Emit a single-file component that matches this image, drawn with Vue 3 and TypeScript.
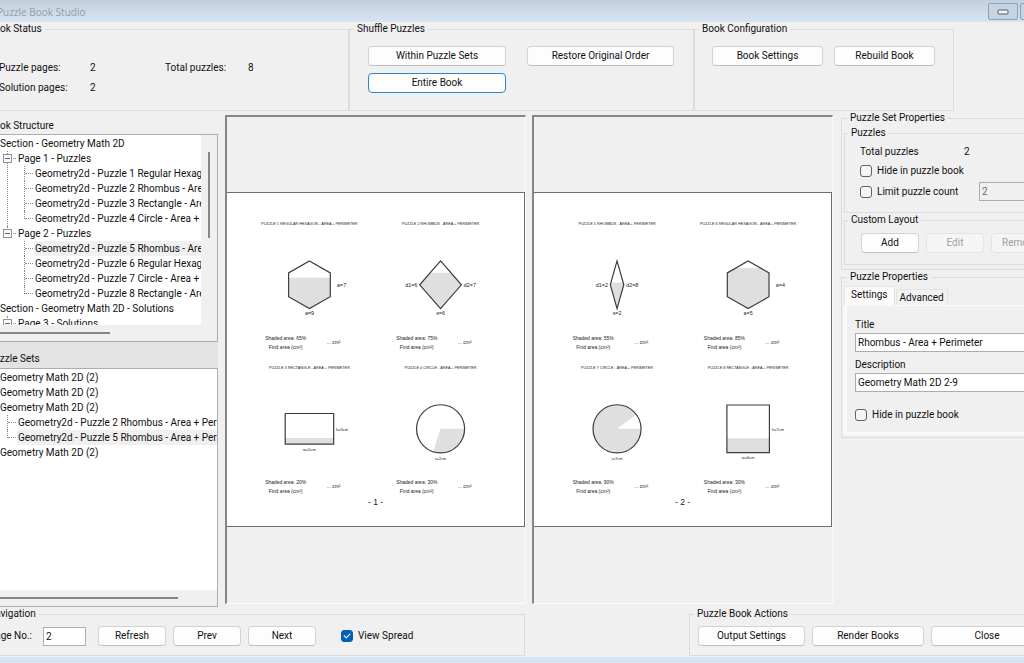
<script setup lang="ts">
import { computed, ref } from 'vue'

type Kind = 'hexagon' | 'rhombus' | 'rectangle' | 'circle'

interface Puzzle {
  title: string
  kind: Kind
  shaded: number
  halfWidth: number
  halfHeight: number
  below: string
  right?: string
  left?: string
  x: number
  y: number
}

interface TreeNode {
  label: string
  selected?: boolean
  children?: TreeNode[]
}

const pageNumber = ref('2')
const viewSpread = ref(true)
const hideSet = ref(false)
const limitCount = ref(false)
const countLimit = ref('2')
const hidePuzzle = ref(false)
const puzzleTitle = ref('Rhombus - Area + Perimeter')
const puzzleDescription = ref('Geometry Math 2D 2-9')
const activeTab = ref('Settings')

const structure: TreeNode[] = [
  {
    label: 'Section - Geometry Math 2D',
    children: [
      {
        label: 'Page 1 - Puzzles',
        children: [
          { label: 'Geometry2d - Puzzle 1 Regular Hexagon - Area + Perimeter' },
          { label: 'Geometry2d - Puzzle 2 Rhombus - Area + Perimeter' },
          { label: 'Geometry2d - Puzzle 3 Rectangle - Area + Perimeter' },
          { label: 'Geometry2d - Puzzle 4 Circle - Area + Perimeter' },
        ],
      },
      {
        label: 'Page 2 - Puzzles',
        children: [
          { label: 'Geometry2d - Puzzle 5 Rhombus - Area + Perimeter', selected: true },
          { label: 'Geometry2d - Puzzle 6 Regular Hexagon - Area + Perimeter' },
          { label: 'Geometry2d - Puzzle 7 Circle - Area + Perimeter' },
          { label: 'Geometry2d - Puzzle 8 Rectangle - Area + Perimeter' },
        ],
      },
    ],
  },
  {
    label: 'Section - Geometry Math 2D - Solutions',
    children: [{ label: 'Page 3 - Solutions', children: [] }],
  },
]

const sets: TreeNode[] = [
  { label: 'Geometry Math 2D (2)' },
  { label: 'Geometry Math 2D (2)' },
  {
    label: 'Geometry Math 2D (2)',
    children: [
      { label: 'Geometry2d - Puzzle 2 Rhombus - Area + Perimeter' },
      { label: 'Geometry2d - Puzzle 5 Rhombus - Area + Perimeter', selected: true },
    ],
  },
  { label: 'Geometry Math 2D (2)' },
]

const pages: { number: number; puzzles: Puzzle[] }[] = [
  {
    number: 1,
    puzzles: [
      { title: 'PUZZLE 1 REGULAR HEXAGON - AREA + PERIMETER', kind: 'hexagon', shaded: 65, halfWidth: 105, halfHeight: 120, below: 'a=9', right: 'a=7', x: 415, y: 462 },
      { title: 'PUZZLE 2 RHOMBUS - AREA + PERIMETER', kind: 'rhombus', shaded: 75, halfWidth: 105, halfHeight: 120, below: 's=6', left: 'd1=6', right: 'd2=7', x: 1075, y: 462 },
      { title: 'PUZZLE 3 RECTANGLE - AREA + PERIMETER', kind: 'rectangle', shaded: 20, halfWidth: 122, halfHeight: 77, below: 'w=5cm', right: 'h=3cm', x: 415, y: 1187 },
      { title: 'PUZZLE 4 CIRCLE - AREA + PERIMETER', kind: 'circle', shaded: 30, halfWidth: 121, halfHeight: 121, below: 'r=2cm', x: 1075, y: 1187 },
    ],
  },
  {
    number: 2,
    puzzles: [
      { title: 'PUZZLE 5 RHOMBUS - AREA + PERIMETER', kind: 'rhombus', shaded: 55, halfWidth: 34, halfHeight: 120, below: 's=2', left: 'd1=2', right: 'd2=8', x: 418, y: 462 },
      { title: 'PUZZLE 6 REGULAR HEXAGON - AREA + PERIMETER', kind: 'hexagon', shaded: 85, halfWidth: 105, halfHeight: 120, below: 'a=5', right: 'a=4', x: 1078, y: 462 },
      { title: 'PUZZLE 7 CIRCLE - AREA + PERIMETER', kind: 'circle', shaded: 90, halfWidth: 121, halfHeight: 121, below: 'r=7cm', x: 418, y: 1187 },
      { title: 'PUZZLE 8 RECTANGLE - AREA + PERIMETER', kind: 'rectangle', shaded: 30, halfWidth: 107, halfHeight: 120, below: 'w=6cm', right: 'h=7cm', x: 1078, y: 1187 },
    ],
  },
]

function outline(p: Puzzle): string {
  const { halfWidth: w, halfHeight: h } = p
  if (p.kind === 'hexagon') return `M0 ${-h}L${w} ${-h / 2}V${h / 2}L0 ${h}L${-w} ${h / 2}V${-h / 2}Z`
  if (p.kind === 'rhombus') return `M0 ${-h}L${w} 0L0 ${h}L${-w} 0Z`
  if (p.kind === 'rectangle') return `M${-w} ${-h}H${w}V${h}H${-w}Z`
  return `M${w} 0A${w} ${w} 0 1 1 ${-w} 0A${w} ${w} 0 1 1 ${w} 0Z`
}

function shade(p: Puzzle): string {
  const { halfWidth: w, halfHeight: h } = p
  if (p.kind === 'circle') {
    const angle = (p.shaded / 100) * Math.PI * 2
    const large = p.shaded > 50 ? 1 : 0
    return `M0 0H${w}A${w} ${w} 0 ${large} 1 ${w * Math.cos(angle)} ${w * Math.sin(angle)}Z`
  }
  const top = h - (2 * h * p.shaded) / 100
  if (p.kind === 'rectangle') return `M${-w} ${top}H${w}V${h}H${-w}Z`
  if (p.kind === 'hexagon') {
    if (top > -h / 2) return `M${-w} ${top}H${w}V${h / 2}L0 ${h}L${-w} ${h / 2}Z`
    const x = (w * (top + h)) / (h / 2)
    return `M${-x} ${top}H${x}L${w} ${-h / 2}V${h / 2}L0 ${h}L${-w} ${h / 2}V${-h / 2}Z`
  }
  const x = (w * (h - Math.abs(top))) / h
  return `M${-x} ${top}H${x}L${w} 0L0 ${h}L${-w} 0Z`
}

function sideGap(p: Puzzle): number {
  return p.halfWidth + (p.kind === 'hexagon' ? 34 : 12)
}

const spread = computed(() => (viewSpread.value ? pages : pages.slice(0, 1)))
</script>

<template>
  <div class="window">
    <header class="titlebar">
      <h1>Puzzle Book Studio</h1>
      <div class="window-buttons">
        <button type="button" aria-label="Minimize">
          <svg width="12" height="6" viewBox="0 0 12 6"><rect x="1" y="1" width="10" height="4" rx="1" fill="#f4f4f4" stroke="#535666" /></svg>
        </button>
        <button type="button" aria-label="Maximize">
          <svg width="12" height="10" viewBox="0 0 12 10"><rect x="1" y="1" width="10" height="8" rx="1" fill="#f4f4f4" stroke="#535666" /></svg>
        </button>
      </div>
    </header>

    <div class="top">
      <fieldset class="status">
        <legend>Book Status</legend>
        <dl>
          <dt>Puzzle pages:</dt><dd>2</dd>
          <dt>Total puzzles:</dt><dd>8</dd>
          <dt>Solution pages:</dt><dd>2</dd>
        </dl>
      </fieldset>
      <fieldset>
        <legend>Shuffle Puzzles</legend>
        <div class="shuffle">
          <button type="button" class="btn">Within Puzzle Sets</button>
          <button type="button" class="btn">Restore Original Order</button>
          <button type="button" class="btn focused">Entire Book</button>
        </div>
      </fieldset>
      <fieldset>
        <legend>Book Configuration</legend>
        <div class="config">
          <button type="button" class="btn">Book Settings</button>
          <button type="button" class="btn">Rebuild Book</button>
        </div>
      </fieldset>
    </div>

    <main class="main">
      <aside class="sidebar">
        <h2>Book Structure</h2>
        <div class="tree structure">
          <div class="tree-view">
            <ul class="roots">
              <li v-for="section in structure" :key="section.label">
                <span class="node">{{ section.label }}</span>
                <ul class="branch">
                  <li v-for="page in section.children" :key="page.label" class="leaf">
                    <button type="button" class="toggle" :aria-label="'Collapse ' + page.label"></button>
                    <span class="node">{{ page.label }}</span>
                    <ul class="branch">
                      <li v-for="item in page.children" :key="item.label" class="leaf">
                        <span class="node" :class="{ selected: item.selected }">{{ item.label }}</span>
                      </li>
                    </ul>
                  </li>
                </ul>
              </li>
            </ul>
          </div>
          <div class="vbar"><i></i></div>
          <div class="hbar"><i></i></div>
        </div>
        <h2 class="sets-title">Puzzle Sets</h2>
        <div class="tree sets">
          <div class="tree-view">
            <ul class="roots">
              <li v-for="(set, i) in sets" :key="i">
                <span class="node">{{ set.label }}</span>
                <ul v-if="set.children" class="branch">
                  <li v-for="item in set.children" :key="item.label" class="leaf">
                    <span class="node" :class="{ selected: item.selected }">{{ item.label }}</span>
                  </li>
                </ul>
              </li>
            </ul>
          </div>
          <div class="hbar"><i></i></div>
        </div>
      </aside>

      <section class="spread">
        <div v-for="page in spread" :key="page.number" class="preview">
          <svg class="page" viewBox="0 0 1495 1680" role="img" :aria-label="'Page ' + page.number">
            <g v-for="p in page.puzzles" :key="p.title" :transform="`translate(${p.x} ${p.y})`">
              <text class="p-title" x="0" y="-300" text-anchor="middle">{{ p.title }}</text>
              <path :d="shade(p)" fill="#dfdfdf" />
              <path :d="outline(p)" fill="none" stroke="#3c3c3c" stroke-width="6" />
              <text v-if="p.left" class="p-side" :x="-sideGap(p)" y="10" text-anchor="end">{{ p.left }}</text>
              <text v-if="p.right" :class="p.kind === 'rectangle' ? 'p-small' : 'p-side'" :x="sideGap(p)" y="10">{{ p.right }}</text>
              <text :class="p.below.length > 3 ? 'p-small' : 'p-side'" x="0" :y="p.halfHeight + 34" text-anchor="middle">{{ p.below }}</text>
              <text class="p-text" x="-223" y="276">Shaded area: {{ p.shaded }}%</text>
              <text class="p-text" x="-205" y="324">Find area (cm²)</text>
              <text class="p-text" x="87" y="300">... cm²</text>
            </g>
            <text class="p-number" x="748" y="1570" text-anchor="middle">- {{ page.number }} -</text>
          </svg>
        </div>
      </section>

      <aside class="properties">
        <fieldset class="set-properties">
          <legend>Puzzle Set Properties</legend>
          <fieldset class="puzzles">
            <legend>Puzzles</legend>
            <div class="row total"><span>Total puzzles</span><output>2</output></div>
            <div class="row hide"><label class="check"><input v-model="hideSet" type="checkbox" />Hide in puzzle book</label></div>
            <div class="row limit">
              <label class="check"><input v-model="limitCount" type="checkbox" />Limit puzzle count</label>
              <input v-model="countLimit" class="text" type="text" aria-label="Puzzle count limit" :disabled="!limitCount" />
            </div>
          </fieldset>
          <fieldset class="layout">
            <legend>Custom Layout</legend>
            <div class="layout-buttons">
              <button type="button" class="btn">Add</button>
              <button type="button" class="btn" disabled>Edit</button>
              <button type="button" class="btn" disabled>Remove</button>
            </div>
          </fieldset>
        </fieldset>

        <fieldset class="puzzle-properties">
          <legend>Puzzle Properties</legend>
          <div class="tabs" role="tablist">
            <button
              v-for="tab in ['Settings', 'Advanced']"
              :key="tab"
              type="button"
              role="tab"
              :aria-selected="activeTab === tab"
              :class="{ active: activeTab === tab }"
              @click="activeTab = tab"
            >{{ tab }}</button>
          </div>
          <div class="tab-panel" role="tabpanel">
            <label class="field" for="puzzle-title">Title</label>
            <input id="puzzle-title" v-model="puzzleTitle" class="text" type="text" />
            <label class="field" for="puzzle-description">Description</label>
            <input id="puzzle-description" v-model="puzzleDescription" class="text" type="text" />
            <label class="check"><input v-model="hidePuzzle" type="checkbox" />Hide in puzzle book</label>
          </div>
        </fieldset>
      </aside>
    </main>

    <footer class="bottom">
      <fieldset class="nav-group">
        <legend>Navigation</legend>
        <div class="navigation">
          <label for="page-no">Page No.:</label>
          <input id="page-no" v-model="pageNumber" class="text" type="text" />
          <button type="button" class="btn">Refresh</button>
          <button type="button" class="btn">Prev</button>
          <button type="button" class="btn">Next</button>
          <label class="check"><input v-model="viewSpread" type="checkbox" />View Spread</label>
        </div>
      </fieldset>
      <fieldset>
        <legend>Puzzle Book Actions</legend>
        <div class="actions">
          <button type="button" class="btn">Output Settings</button>
          <button type="button" class="btn">Render Books</button>
          <button type="button" class="btn">Close</button>
        </div>
      </fieldset>
    </footer>
  </div>
</template>

<style>
body {
  margin: 0;
  overflow: hidden;
  background: #f0f0f0;
}
</style>

<style scoped>
.window,
.window * {
  box-sizing: border-box;
}

/* The window is wider than the viewport and starts left of it. */
.window {
  display: flex;
  flex-direction: column;
  width: calc(100% + 66px);
  min-height: 100vh;
  margin-left: -16px;
  border-bottom: 6px solid #d7e4f2;
  background: #f0f0f0;
  color: #111;
  font-family: Roboto, "Liberation Sans", Arial, sans-serif;
  font-size: 10px;
  line-height: 14px;
}

button,
input {
  font: inherit;
  color: inherit;
}

.titlebar {
  display: flex;
  justify-content: space-between;
  height: 22px;
  padding: 0 24px 0 13px;
  background: linear-gradient(#c2cfdc, #d7e4f2);
}

h1 {
  margin: 0;
  color: #969ca3;
  font-family: "Open Sans", "Noto Sans", sans-serif;
  font-size: 10px;
  font-weight: 400;
  line-height: 24px;
}

.window-buttons {
  display: flex;
  gap: 2px;
  padding-top: 3px;
}

.window-buttons button {
  display: grid;
  place-items: center;
  width: 30px;
  height: 17px;
  padding: 0;
  border: 1px solid #8e9fb8;
  border-radius: 2px;
  background: #c5d3e5;
}

fieldset {
  min-width: 0;
  margin: 0;
  padding: 0;
  border: 1px solid #dcdcdc;
}

legend {
  margin-left: 4px;
  padding: 0 3px;
}

.status legend,
.nav-group legend {
  margin-left: 0;
}

.properties legend {
  margin-left: 3px;
}

.btn {
  height: 20px;
  padding: 0 4px;
  border: 1px solid #d2d2d2;
  border-bottom-color: #bebebe;
  border-radius: 4px;
  background: #fdfdfd;
  line-height: 18px;
  white-space: nowrap;
}

.btn.focused {
  border-color: #2b86d3;
}

.btn:disabled {
  border-color: #e4e4e4;
  background: #f5f5f5;
  color: #a0a0a0;
}

.text {
  min-width: 0;
  height: 19px;
  padding: 0 2px;
  border: 1px solid #abadb3;
  border-radius: 0;
  background: #fff;
}

.text:disabled {
  background: #f0f0f0;
  color: #6d6d6d;
}

.check {
  display: flex;
  align-items: center;
  gap: 5px;
  white-space: nowrap;
}

.check input {
  display: grid;
  place-items: center;
  width: 12px;
  height: 12px;
  margin: 0;
  border: 1px solid #626262;
  border-radius: 3px;
  appearance: none;
  background: #f5f5f5;
}

.check input:checked {
  border-color: #005fb8;
  background: #005fb8;
}

.check input:checked::after {
  width: 5px;
  height: 3px;
  margin-top: -2px;
  border: solid #fff;
  border-width: 0 0 1px 1px;
  content: "";
  transform: rotate(-45deg);
}

.top {
  display: grid;
  grid-template-columns: 365px 345px 260px;
  height: 89px;
}

.status dl {
  display: grid;
  grid-template-columns: 91px 75px 83px 1fr;
  grid-auto-rows: 20px;
  margin: 0;
  padding: 22px 0 0 14px;
  line-height: 20px;
}

.status dd {
  margin: 0;
}

.shuffle {
  display: grid;
  grid-template-columns: 138px 147px;
  gap: 7px 21px;
  padding: 10px 0 0 18px;
}

.config {
  display: grid;
  grid-template-columns: 111px 101px;
  gap: 11px;
  padding: 10px 0 0 17px;
}

.main {
  display: grid;
  flex: 1;
  grid-template-columns: 234px 1fr 233px;
}

.sidebar {
  display: flex;
  flex-direction: column;
  background: #e3e3e3;
}

h2 {
  margin: 0;
  padding: 8px 0 1px 4px;
  background: #f0f0f0;
  font-size: 10px;
  font-weight: 400;
}

h2.sets-title {
  padding: 10px 0 2px 4px;
  background: none;
}

.tree {
  display: grid;
  grid-template-columns: minmax(0, 1fr) auto;
  grid-template-rows: minmax(0, 1fr) 16px;
  border: 1px solid #abadb3;
  background: #fff;
}

.structure {
  height: 208px;
}

.sets {
  flex: 1;
}

.tree-view {
  overflow: hidden;
}

.roots {
  padding: 1px 0 0 15px;
}

.tree ul {
  margin: 0;
  list-style: none;
}

.tree li {
  position: relative;
  line-height: 15px;
  white-space: nowrap;
}

.branch {
  padding-left: 17px;
}

.node {
  display: block;
  overflow: hidden;
  padding-left: 1px;
}

.roots > li > .node {
  padding-left: 0;
}

.selected {
  background: #f0f0f0;
}

.leaf::before {
  position: absolute;
  top: 0;
  bottom: 0;
  left: -10px;
  border-left: 1px dotted #8c8c8c;
  content: "";
}

.leaf:last-child::before {
  bottom: auto;
  height: 8px;
}

.leaf::after {
  position: absolute;
  top: 7px;
  left: -9px;
  width: 8px;
  border-top: 1px dotted #8c8c8c;
  content: "";
}

.toggle {
  position: absolute;
  z-index: 1;
  top: 3px;
  left: -14px;
  display: grid;
  place-items: center;
  width: 9px;
  height: 9px;
  padding: 0;
  border: 1px solid #919191;
  background: #fafafa;
}

.toggle::before {
  width: 5px;
  height: 1px;
  background: #4b63a7;
  content: "";
}

.vbar,
.hbar {
  display: flex;
  background: #f0f0f0;
}

.vbar {
  width: 16px;
  padding: 17px 0 0 7px;
}

.vbar i {
  width: 2px;
  height: 86px;
  background: #858585;
}

.hbar {
  grid-column: 1 / -1;
  padding-top: 7px;
}

.hbar i {
  width: 83%;
  height: 2px;
  background: #858585;
}

.structure .hbar i {
  width: 54%;
}

.spread {
  display: flex;
  gap: 6px;
  padding: 4px 8px 3px 7px;
}

.preview {
  display: flex;
  flex: 1;
  align-items: center;
  min-width: 0;
  padding-bottom: 1px;
  border: solid;
  border-width: 2px 1px 1px 2px;
  border-color: #858585 #fafafa #fafafa #858585;
}

.page {
  width: 100%;
  border: 1px solid #6e6e6e;
  border-left: 0;
  background: #fff;
}

.page text {
  fill: #222;
  font-family: "Liberation Sans", Arial, sans-serif;
}

.page .p-title {
  font-size: 19px;
}

.page .p-side {
  font-size: 27px;
}

.page .p-small {
  font-size: 20px;
}

.page .p-text {
  font-size: 25px;
}

.page .p-number {
  font-size: 43px;
}

.set-properties {
  padding: 1px 2px 4px;
}

.puzzles {
  height: 87px;
}

.row {
  display: flex;
  align-items: center;
  padding-left: 15px;
}

.total {
  height: 24px;
}

.total span {
  width: 104px;
}

.hide {
  height: 13px;
}

.limit {
  height: 29px;
}

.limit .check {
  width: 119px;
}

.limit .text {
  width: 80px;
}

.layout {
  height: 52px;
}

.layout-buttons {
  display: grid;
  grid-template-columns: repeat(3, 58px);
  gap: 7px;
  padding: 6px 0 0 16px;
}

.puzzle-properties {
  padding: 2px;
}

.tabs {
  display: flex;
  align-items: flex-end;
  gap: 1px;
}

.tabs button {
  height: 16px;
  padding: 0 3px;
  border: 1px solid #e4e4e4;
  border-bottom: 0;
  background: #f2f2f2;
}

.tabs .active {
  height: 19px;
  padding: 0 6px 3px;
  background: #fafafa;
}

.tab-panel {
  display: flex;
  flex-direction: column;
  padding: 12px 6px 10px 8px;
  border: 3px solid #f9f9f9;
  border-top-width: 1px;
}

.field {
  padding-bottom: 1px;
}

.tab-panel .text + .field {
  padding-top: 6px;
}

.tab-panel .check {
  padding-top: 16px;
}

.bottom {
  display: grid;
  grid-template-columns: 541px 385px;
  justify-content: space-between;
  padding-bottom: 1px;
}

.bottom fieldset {
  height: 49px;
}

.navigation {
  display: flex;
  align-items: center;
  gap: 7px;
  padding: 5px 0 0 4px;
}

.navigation label[for] {
  width: 47px;
  white-space: nowrap;
}

.navigation .text {
  width: 43px;
  margin-right: 5px;
}

.navigation .btn {
  width: 68px;
}

.navigation .check {
  margin-left: 18px;
}

.actions {
  display: grid;
  grid-template-columns: 107px 112px 112px;
  gap: 7px;
  padding: 5px 0 0 8px;
}
</style>
